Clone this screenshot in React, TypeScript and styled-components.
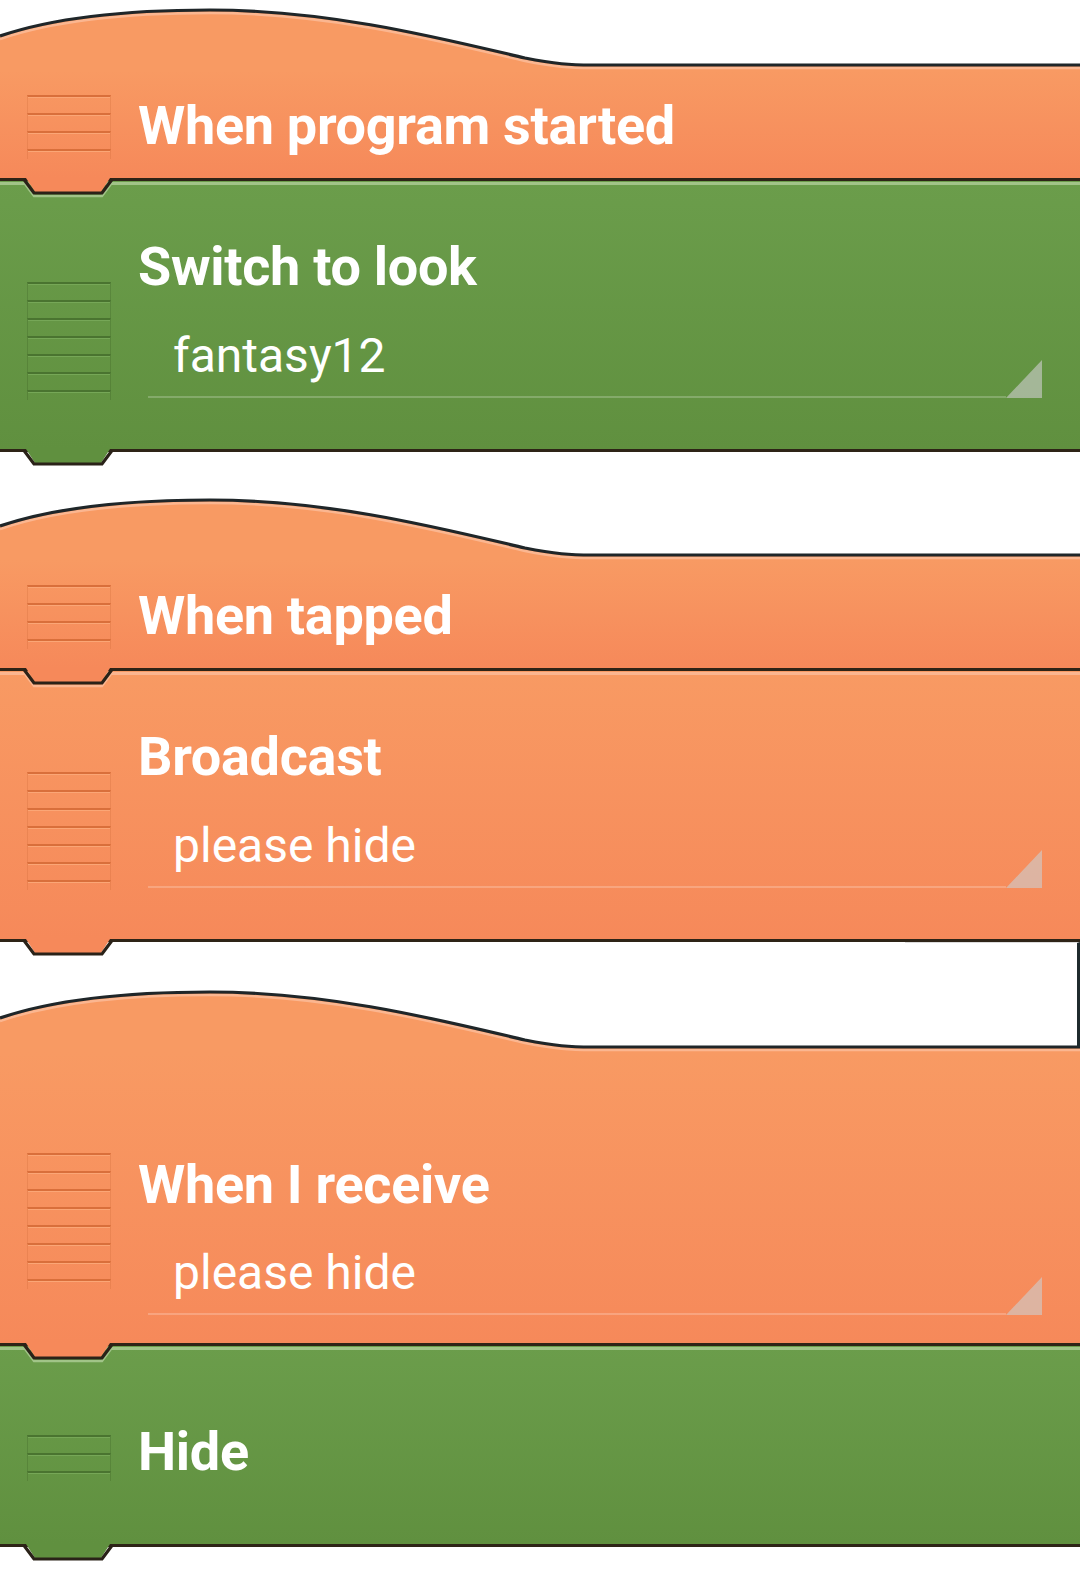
import React from 'react';
import styled, { createGlobalStyle } from 'styled-components';

type Tone = 'orange' | 'green';

const palette = {
  orange: {
    top: '#f89a63',
    bottom: '#f6895a',
    light: '#fbb690',
    line: '#d96f3b',
    lineLight: '#fba676',
    side: 'rgba(190, 90, 40, 0.2)',
  },
  green: {
    top: '#6b9d4b',
    bottom: '#60903f',
    light: '#a1c488',
    line: '#4a7430',
    lineLight: '#76a757',
    side: 'rgba(40, 70, 20, 0.2)',
  },
};

const Global = createGlobalStyle`
  body {
    margin: 0;
    background: #fff;
    font-family: Roboto, "Liberation Sans", sans-serif;
  }
`;

const Page = styled.div`
  display: flex;
  flex-direction: column;
  width: 1080px;
  height: 1569px;
  padding-top: 8px;
  box-sizing: border-box;
  overflow: hidden;
`;

const Script = styled.section<{ $gap: number }>`
  display: flex;
  flex-direction: column;
  margin-top: ${p => p.$gap}px;
`;

const Gap = styled.div<{ $h: number }>`
  height: ${p => p.$h}px;
  box-sizing: border-box;
  border-right: 3px solid #1f2a2d;
  border-top: 1px solid #dcdcdc;
  margin-left: 905px;
`;

const Cap = styled.svg`
  display: block;
  width: 1080px;
  height: 62px;
`;

const Body = styled.div<{ $tone: Tone; $h: number; $hat?: boolean }>`
  position: relative;
  display: flex;
  height: ${p => p.$h}px;
  box-sizing: border-box;
  padding-left: 27px;
  border-bottom: 3px solid #2e2417;
  background: ${p =>
    p.$hat
      ? `linear-gradient(${palette[p.$tone].top}, ${palette[p.$tone].bottom})`
      : `linear-gradient(${palette[p.$tone].light}, ${palette[p.$tone].light}) 0 1px / 100% 3px no-repeat,
         linear-gradient(${palette[p.$tone].top}, ${palette[p.$tone].bottom})`};
`;

const Handle = styled.div<{ $top: number }>`
  display: flex;
  flex-direction: column;
  width: 84px;
  flex-shrink: 0;
  align-self: flex-start;
  margin-top: ${p => p.$top}px;
`;

const Slot = styled.div<{ $tone: Tone }>`
  height: 18px;
  box-sizing: border-box;
  border-top: 2px solid ${p => palette[p.$tone].line};
  border-left: 1px solid ${p => palette[p.$tone].side};
  border-right: 1px solid ${p => palette[p.$tone].side};
  box-shadow: inset 0 1px 0 ${p => palette[p.$tone].lineLight};

  &:last-child {
    height: 10px;
  }
`;

const Content = styled.div<{ $top: number }>`
  display: flex;
  flex-direction: column;
  flex: 1;
  padding-left: 27px;
  padding-top: ${p => p.$top}px;
`;

const Label = styled.div`
  font-weight: 700;
  font-size: 54px;
  line-height: 54px;
  letter-spacing: -0.3px;
  color: #fff;
  white-space: nowrap;
`;

const Dropdown = styled.div<{ $gap: number }>`
  display: flex;
  align-items: flex-end;
  width: 894px;
  margin-left: 10px;
  margin-top: ${p => p.$gap}px;
`;

const Value = styled.div`
  flex: 1;
  padding: 0 0 17px 25px;
  border-bottom: 2px solid rgba(255, 255, 255, 0.22);
  font-weight: 400;
  font-size: 48px;
  line-height: 47px;
  color: #fff;
  white-space: nowrap;
`;

const Corner = styled.svg`
  display: block;
  width: 36px;
  height: 38px;
  flex-shrink: 0;
`;

const Notch = styled.svg`
  position: absolute;
  left: 24px;
  top: 100%;
  width: 90px;
  height: 20px;
  z-index: 2;
  overflow: visible;
`;

const curve =
  'M0,28 C50,11 120,2 210,2 C330,2 440,30 525,50 C555,56 570,57 592,57 L1080,57';

function HatCap({ tone, edge }: { tone: Tone; edge?: boolean }) {
  return (
    <Cap viewBox="0 0 1080 62">
      <path d={`${curve} L1080,62 L0,62 Z`} fill={palette[tone].top} />
      <path d={curve} transform="translate(0,3)" fill="none" stroke={palette[tone].light} strokeWidth={2.5} />
      <path d={curve} fill="none" stroke="#1f2629" strokeWidth={3.2} />
      {edge && <line x1={1078.5} y1={0} x2={1078.5} y2={57} stroke="#1f2a2d" strokeWidth={3} />}
    </Cap>
  );
}

function Tab({ tone, next }: { tone: Tone; next?: Tone }) {
  return (
    <Notch viewBox="0 0 90 20">
      {next && (
        <polyline
          points="0,4.5 10,18 78,18 88,4.5"
          fill="none"
          stroke={palette[next].light}
          strokeWidth={2.5}
        />
      )}
      <polygon points="2,0 86,0 77,14 11,14" fill={palette[tone].bottom} />
      <polyline points="0,1.5 10,15 78,15 88,1.5" fill="none" stroke="#2a2218" strokeWidth={3.2} />
    </Notch>
  );
}

type BlockProps = {
  tone: Tone;
  height: number;
  label: string;
  labelTop: number;
  handleTop: number;
  lines: number;
  value?: string;
  valueGap?: number;
  hat?: boolean;
  edge?: boolean;
  next?: Tone;
};

function Block({ tone, height, label, labelTop, handleTop, lines, value, valueGap = 38, hat, edge, next }: BlockProps) {
  return (
    <>
      {hat && <HatCap tone={tone} edge={edge} />}
      <Body $tone={tone} $h={height} $hat={hat}>
        <Handle $top={handleTop}>
          {Array.from({ length: lines }, (_, i) => (
            <Slot key={i} $tone={tone} />
          ))}
        </Handle>
        <Content $top={labelTop}>
          <Label>{label}</Label>
          {value && (
            <Dropdown $gap={valueGap}>
              <Value>{value}</Value>
              <Corner viewBox="0 0 36 38">
                <polygon points="0,38 36,38 36,0" fill="rgba(205, 205, 205, 0.62)" />
              </Corner>
            </Dropdown>
          )}
        </Content>
        <Tab tone={tone} next={next} />
      </Body>
    </>
  );
}

export default function App() {
  return (
    <>
      <Global />
      <Page>
        <Script $gap={0}>
          <Block tone="orange" hat height={111} label="When program started" labelTop={29} handleTop={25} lines={4} next="green" />
          <Block tone="green" height={271} label="Switch to look" labelTop={59} handleTop={101} lines={7} value="fantasy12" />
        </Script>

        <Script $gap={46}>
          <Block tone="orange" hat height={111} label="When tapped" labelTop={29} handleTop={25} lines={4} next="orange" />
          <Block tone="orange" height={271} label="Broadcast" labelTop={59} handleTop={101} lines={7} value="please hide" />
        </Script>

        <Script $gap={0}>
          <Gap $h={48} />
          <Block
            tone="orange"
            hat
            edge
            height={294}
            label="When I receive"
            labelTop={106}
            handleTop={101}
            lines={8}
            value="please hide"
            valueGap={37}
            next="green"
          />
          <Block tone="green" height={201} label="Hide" labelTop={79} handleTop={89} lines={3} />
        </Script>
      </Page>
    </>
  );
}
